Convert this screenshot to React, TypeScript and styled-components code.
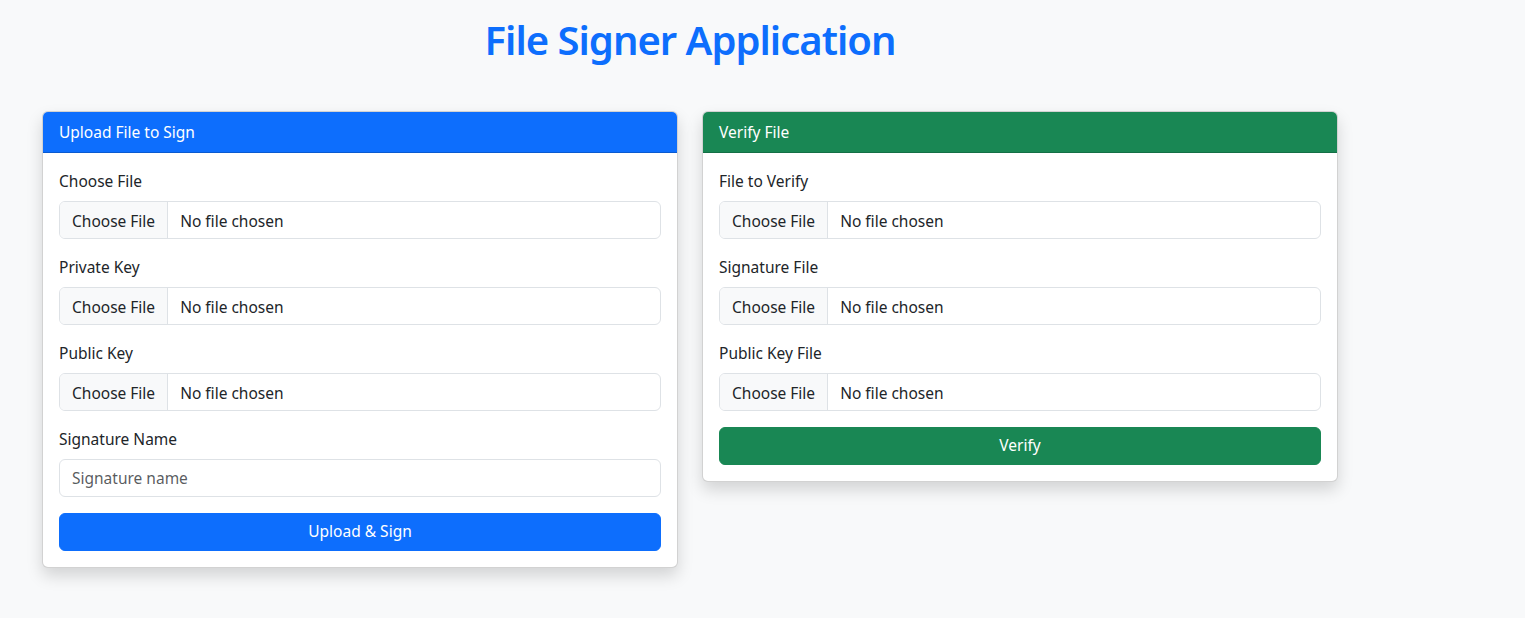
import React from "react";
import styled, { createGlobalStyle } from "styled-components";

const GlobalStyle = createGlobalStyle`
  html, body { margin: 0; padding: 0; }
  body {
    background: #f8f9fa;
    color: #212529;
    font-family: "Noto Sans", "Open Sans", sans-serif;
    font-size: 16px;
    line-height: 1.5;
  }
  * { box-sizing: border-box; }
`;

const Container = styled.div`
  width: 1320px;
  margin-left: 30px;
  padding-top: 16px;
  padding-bottom: 48px;
`;

const Title = styled.h1`
  margin: 0 0 47px;
  text-align: center;
  font-size: 40px;
  line-height: 48px;
  font-weight: 600;
  color: #0d6efd;
  letter-spacing: -1px;
`;

const Row = styled.div`
  display: grid;
  grid-template-columns: 1fr 1fr;
  align-items: start;
`;

const Col = styled.div`
  padding: 0 12px;
`;

const Card = styled.div`
  background: #fff;
  border: 1px solid rgba(0, 0, 0, 0.175);
  border-radius: 6px;
  box-shadow: 0 8px 16px rgba(0, 0, 0, 0.15);
  overflow: hidden;
`;

const CardHeader = styled.div<{ $bg: string }>`
  background: ${(p) => p.$bg};
  color: #fff;
  padding: 8px 16px;
  line-height: 24px;
  border-bottom: 1px solid rgba(0, 0, 0, 0.175);
  font-size: 15.5px;
`;

const CardBody = styled.div`
  padding: 16px;
`;

const Group = styled.div`
  margin-bottom: 16px;
`;

const Label = styled.label`
  display: block;
  margin-bottom: 8px;
  line-height: 24px;
  font-size: 15.5px;
`;

const FileField = styled.div`
  display: flex;
  align-items: stretch;
  height: 38px;
  border: 1px solid #dee2e6;
  border-radius: 6px;
  overflow: hidden;
  background: #fff;
  font-size: 15.5px;
  line-height: 24px;
`;

const FileButton = styled.span`
  display: flex;
  align-items: center;
  padding: 1px 12px 0;
  background: #f8f9fa;
  border-right: 1px solid #dee2e6;
  color: #212529;
`;

const FileText = styled.span`
  display: flex;
  align-items: center;
  padding: 1px 12px 0;
  color: #212529;
`;

const TextInput = styled.input`
  display: block;
  width: 100%;
  height: 38px;
  padding: 0 12px;
  border: 1px solid #dee2e6;
  border-radius: 6px;
  font: inherit;
  font-size: 15.5px;
  color: #212529;
  background: #fff;
  &::placeholder {
    color: rgba(33, 37, 41, 0.75);
  }
`;

const Button = styled.button<{ $bg: string }>`
  display: block;
  width: 100%;
  height: 38px;
  padding-top: 1px;
  border: 1px solid ${(p) => p.$bg};
  border-radius: 6px;
  background: ${(p) => p.$bg};
  color: #fff;
  font: inherit;
  font-size: 15.5px;
  cursor: pointer;
`;

const FileInput = ({ label }: { label: string }) => (
  <Group>
    <Label>{label}</Label>
    <FileField>
      <FileButton>Choose File</FileButton>
      <FileText>No file chosen</FileText>
    </FileField>
  </Group>
);

export default function App() {
  return (
    <>
      <GlobalStyle />
      <Container>
        <Title>File Signer Application</Title>
        <Row>
          <Col>
            <Card>
              <CardHeader $bg="#0d6efd">Upload File to Sign</CardHeader>
              <CardBody>
                <FileInput label="Choose File" />
                <FileInput label="Private Key" />
                <FileInput label="Public Key" />
                <Group>
                  <Label>Signature Name</Label>
                  <TextInput placeholder="Signature name" />
                </Group>
                <Button $bg="#0d6efd">Upload &amp; Sign</Button>
              </CardBody>
            </Card>
          </Col>
          <Col>
            <Card>
              <CardHeader $bg="#198754">Verify File</CardHeader>
              <CardBody>
                <FileInput label="File to Verify" />
                <FileInput label="Signature File" />
                <FileInput label="Public Key File" />
                <Button $bg="#198754">Verify</Button>
              </CardBody>
            </Card>
          </Col>
        </Row>
      </Container>
    </>
  );
}
